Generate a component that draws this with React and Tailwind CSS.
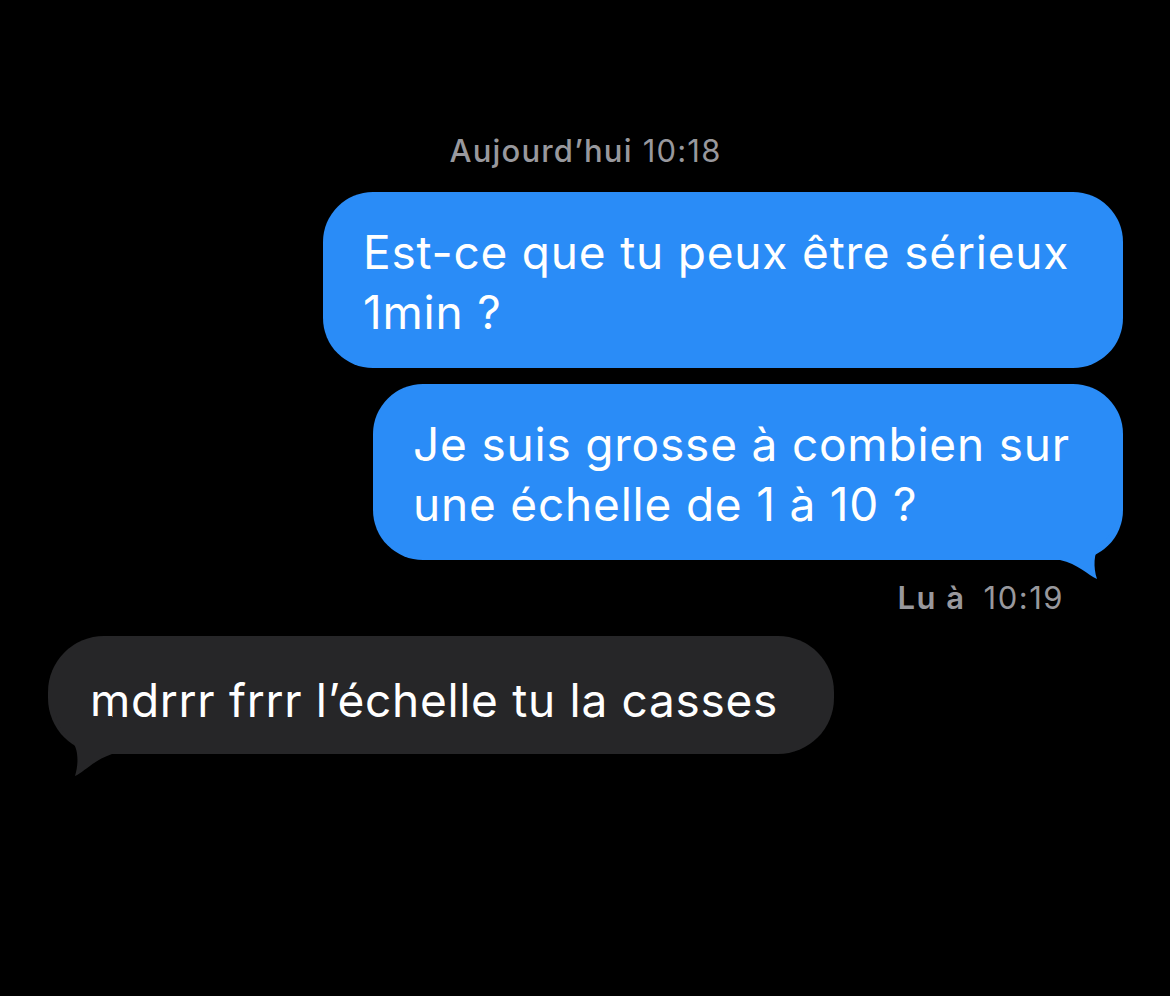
import React from 'react';

const font = { fontFamily: 'Inter, "Noto Sans", sans-serif' };

// bubble tail, drawn as a little curl at the bottom corner
const Tail = ({ side, color }) => {
  if (side === 'right') {
    return (
      <svg className="absolute right-[3px] bottom-[-20px]" width="60" height="60" viewBox="0 0 60 60">
        <path d="M0 40 L0 0 L56 0 C53 12 46 20 39 27 C34 33 33 47 37 59 C28 55 18 44 0 40 Z" fill={color} />
      </svg>
    );
  }
  return (
    <svg className="absolute left-[4px] bottom-[-22px]" width="60" height="60" viewBox="0 0 60 60">
      <path d="M60 38 L60 0 L4 0 C7 12 14 20 21 27 C26 33 27 47 23 60 C32 56 42 44 60 38 Z" fill={color} />
    </svg>
  );
};

const SentBubble = ({ lines, width, tail }) => (
  <div className={`relative bg-[#2a8cf7] rounded-[50px] pl-[40px] pt-[30px] pb-[26px] ${width}`}>
    <div className="text-white text-[46px] leading-[60px] tracking-[0.8px] whitespace-nowrap">
      {lines.map((l, i) => (
        <div key={i}>{l}</div>
      ))}
    </div>
    {tail && <Tail side="right" color="#2a8cf7" />}
  </div>
);

export default function App() {
  return (
    <div className="w-[1170px] h-[996px] bg-black overflow-hidden" style={font}>
      <div className="flex flex-col pt-[132px] pl-[48px] pr-[47px]">
        {/* day stamp */}
        <div className="text-center text-[#98989d] text-[31px] leading-[38px] tracking-[1.2px]">
          <span className="font-medium">Aujourd’hui</span> 10:18
        </div>

        <div className="flex flex-col items-end mt-[22px] gap-[16px]">
          <SentBubble width="w-[800px]" lines={['Est-ce que tu peux être sérieux', '1min ?']} />
          <SentBubble width="w-[750px]" lines={['Je suis grosse à combien sur', 'une échelle de 1 à 10 ?']} tail />
        </div>

        <div className="flex justify-end mt-[19px] pr-[59px] text-[#98989d] text-[31px] leading-[38px] tracking-[1.5px]">
          <span className="font-semibold">Lu à</span>
          <span className="ml-[18px]">10:19</span>
        </div>

        {/* received */}
        <div className="relative mt-[19px] w-[786px] bg-[#262628] rounded-[56px] pl-[42px] pt-[34px] pb-[24px]">
          <div className="text-white text-[46px] leading-[60px] tracking-[0.7px] whitespace-nowrap">
            mdrrr frrr l’échelle tu la casses
          </div>
          <Tail side="left" color="#262628" />
        </div>
      </div>
    </div>
  );
}
